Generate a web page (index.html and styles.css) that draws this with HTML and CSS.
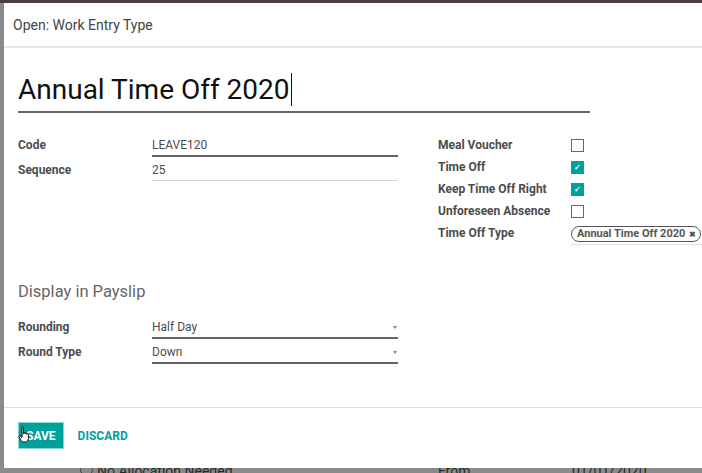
FILE: index.html
```html
<!DOCTYPE html>
<html lang="en">
<head>
    <meta charset="UTF-8">
    <title>Open: Work Entry Type</title>
    <link rel="stylesheet" href="styles.css">
</head>
<body>
    <div class="topbar"></div>
    <div class="modal">
        <div class="modal-header">Open: Work Entry Type</div>
        <div class="modal-body">
            <div class="titulo"><span class="titulo-texto">Annual Time Off 2020</span></div>

            <div class="grupos">
                <div class="grupo">
                    <div class="linha">
                        <div class="rotulo">Code</div>
                        <div class="campo campo-foco">LEAVE120</div>
                    </div>
                    <div class="linha">
                        <div class="rotulo">Sequence</div>
                        <div class="campo">25</div>
                    </div>
                </div>
                <div class="grupo grupo-direita">
                    <div class="linha-check">
                        <div class="rotulo">Meal Voucher</div>
                        <span class="check"></span>
                    </div>
                    <div class="linha-check">
                        <div class="rotulo">Time Off</div>
                        <span class="check marcado">&#10003;</span>
                    </div>
                    <div class="linha-check">
                        <div class="rotulo">Keep Time Off Right</div>
                        <span class="check marcado">&#10003;</span>
                    </div>
                    <div class="linha-check">
                        <div class="rotulo">Unforeseen Absence</div>
                        <span class="check"></span>
                    </div>
                    <div class="linha-check">
                        <div class="rotulo">Time Off Type</div>
                        <div class="campo-tag"><span class="tag">Annual Time Off 2020 <b>&#10006;</b></span></div>
                    </div>
                </div>
            </div>

            <h2 class="secao">Display in Payslip</h2>
            <div class="grupo">
                <div class="linha">
                    <div class="rotulo">Rounding</div>
                    <div class="campo campo-foco select">Half Day</div>
                </div>
                <div class="linha">
                    <div class="rotulo">Round Type</div>
                    <div class="campo campo-foco select">Down</div>
                </div>
            </div>
        </div>
        <div class="modal-footer">
            <button class="btn-salvar">Save</button>
            <button class="btn-descartar">Discard</button>
            <svg class="cursor" width="14" height="18" viewBox="0 0 14 18">
                <path d="M4 1.5c0-.8 1.4-.8 1.4 0V8l.3-1.2c.3-.7 1.4-.5 1.4.2v1l.3-.8c.3-.7 1.4-.5 1.4.2v1l.3-.6c.3-.6 1.3-.4 1.3.3v4.4c0 2-1.2 3.5-3 3.5H6c-1.3 0-2-.6-2.7-1.6L1 10.8c-.5-.8.5-1.6 1.2-.9L4 11.6z" fill="#fff" stroke="#111" stroke-width="1"/>
            </svg>
        </div>
    </div>
    <div class="fundo-pagina">
        <span class="fp-radio"></span>
        <span class="fp-a">No Allocation Needed</span>
        <span class="fp-b">From</span>
        <span class="fp-c">01/01/2020</span>
    </div>
</body>
</html>
```

FILE: styles.css
```css
html, body {
    margin: 0;
    padding: 0;
    height: 473px;
    overflow: hidden;
}

body {
    font-family: Roboto, "Noto Sans", Arial, sans-serif;
    background-color: #8a8a8a;
    color: #4c4c4c;
}

.topbar {
    height: 3px;
    background: #4b3a48;
}

.modal {
    margin-left: 4px;
    width: 760px;
    height: 465px;
    background: #fff;
    display: flex;
    flex-direction: column;
}

.modal-header {
    height: 43px;
    display: flex;
    align-items: center;
    padding-left: 9px;
    font-size: 14px;
    color: #444;
    border-bottom: 2px solid #e6e6e6;
}

.modal-body {
    flex: 1;
    padding: 0 14px;
}

.titulo {
    margin-top: 25px;
    width: 572px;
    height: 34px;
    line-height: 34px;
    padding-bottom: 4px;
    font-size: 28px;
    color: #111;
    border-bottom: 2px solid #666;
}

.titulo-texto {
    border-right: 1px solid #111;
    padding-right: 1px;
}

.grupos {
    display: flex;
    margin-top: 21px;
}

.grupo {
    width: 400px;
    flex-shrink: 0;
}

.grupo-direita {
    padding-left: 20px;
}

.linha {
    display: flex;
    box-sizing: border-box;
    height: 25px;
    padding-top: 1px;
}

.linha-check {
    display: flex;
    align-items: center;
    height: 22px;
}

.rotulo {
    width: 134px;
    flex-shrink: 0;
    font-size: 12px;
    font-weight: bold;
    line-height: 20px;
    color: #4c4c4c;
}

.grupo-direita .rotulo {
    width: 133px;
}

.campo {
    width: 246px;
    height: 20px;
    line-height: 20px;
    font-size: 12px;
    border-bottom: 1px solid #d4d4d4;
    position: relative;
}

.campo-foco {
    border-bottom: 2px solid #666;
}

.select::after {
    content: "";
    position: absolute;
    right: 1px;
    top: 9px;
    border-left: 2.5px solid transparent;
    border-right: 2.5px solid transparent;
    border-top: 3px solid #888;
}

.check {
    width: 11px;
    height: 11px;
    border: 1px solid #666;
    background: #fff;
    font-size: 8px;
    line-height: 11px;
    text-align: center;
    color: #fff;
    font-weight: bold;
}

.check.marcado {
    background: #00a09d;
    border-color: #00a09d;
}

.campo-tag {
    flex: 1;
    height: 21px;
    display: flex;
    align-items: center;
    border-bottom: 1px solid #e0e0e0;
    margin-top: 2px;
}

.tag {
    font-size: 11px;
    font-weight: bold;
    color: #555;
    border: 1px solid #555;
    border-radius: 8px;
    padding: 0 4px 0 5px;
    line-height: 13px;
    white-space: nowrap;
}

.tag b {
    font-size: 8px;
    margin-left: 1px;
}

.secao {
    margin: 38px 0 14px;
    font-size: 16.5px;
    font-weight: normal;
    line-height: 20px;
    color: #666;
}

.modal-footer {
    border-top: 1px solid #dcdcdc;
    padding: 14px 14px 19px;
    display: flex;
    align-items: center;
    position: relative;
}

.modal-footer button {
    font-family: inherit;
    font-size: 12px;
    font-weight: bold;
    text-transform: uppercase;
    height: 27px;
    cursor: pointer;
}

.btn-salvar {
    background: #00a09d;
    color: #fff;
    border: 1px solid #8fd4d2;
    padding: 0 7px;
}

.btn-descartar {
    background: none;
    border: none;
    color: #00a09d;
    margin-left: 8px;
    font-size: 11.5px;
}

.cursor {
    position: absolute;
    left: 14px;
    top: 18px;
}

.fundo-pagina {
    height: 5px;
    overflow: hidden;
    position: relative;
    font-size: 14px;
    color: #2a2a2a;
}

.fundo-pagina span {
    position: absolute;
    top: -5px;
    line-height: 16px;
}

.fp-radio {
    left: 80px;
    width: 11px;
    height: 11px;
    border: 1px solid #444;
    border-radius: 50%;
}

.fp-a { left: 97px; }
.fp-b { left: 438px; }
.fp-c { left: 572px; }
```
